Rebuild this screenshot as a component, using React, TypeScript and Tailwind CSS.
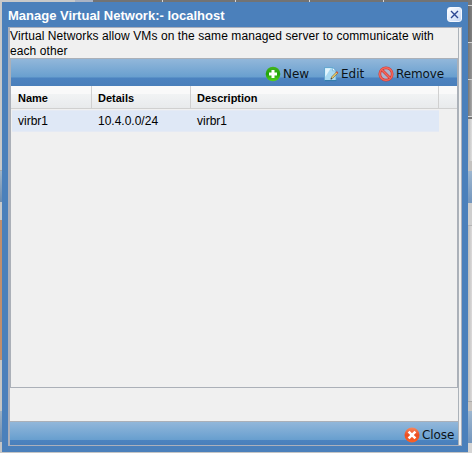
import React from 'react';

const Glossy = 'bg-[linear-gradient(to_bottom,#92b7da_0%,#689fcf_68%,#4c83c0_69%,#497fba_100%)]';
const FooterGlossy = 'bg-[linear-gradient(to_bottom,#92b7da_0%,#689fcf_77%,#4c83c0_78%,#497fba_100%)]';

function AddIcon() {
  return (
    <svg width="16" height="16" viewBox="0 0 16 16" className="shrink-0">
      <defs>
        <linearGradient id="add" x1="0" y1="0" x2="0" y2="1">
          <stop offset="0" stopColor="#45b51d" />
          <stop offset="0.5" stopColor="#20a30b" />
          <stop offset="1" stopColor="#57d41f" />
        </linearGradient>
      </defs>
      <circle cx="8" cy="8" r="7.3" fill="url(#add)" />
      <path d="M6.5 4h3v2.5H12v3H9.5V12h-3V9.5H4v-3h2.5z" fill="#fff" />
    </svg>
  );
}

function EditIcon() {
  return (
    <svg width="16" height="16" viewBox="0 0 16 16" className="shrink-0">
      <path d="M1.5 1.5h8.5l3 3V14.5H1.5z" fill="#a9daf2" stroke="#5aa1cc" strokeWidth="0.8" />
      <path d="M2.2 2.2h5.6L2.2 11z" fill="#e2f5fd" />
      <path d="M9.6 1.5v3.3h3.2z" fill="#fff" stroke="#5aa1cc" strokeWidth="0.6" />
      <path d="M1.5 14.6h12" stroke="#317aab" strokeWidth="1" />
      <path d="M8 13l.6-2.1 4.9-5 1.3 1.2-4.9 5z" fill="#f1cf62" stroke="#695735" strokeWidth="0.6" />
      <path d="M13 6.2l.8-.9 1.5 1.3-.9 1z" fill="#d75038" />
      <path d="M7.6 13.4l.4-1.5 1.1 1z" fill="#222" />
    </svg>
  );
}

function RemoveIcon() {
  return (
    <svg width="16" height="16" viewBox="0 0 16 16" className="shrink-0">
      <circle cx="8" cy="8" r="6.2" fill="#a9b4cf" stroke="#cd3933" strokeWidth="2.7" />
      <circle cx="8" cy="8" r="6.3" fill="none" stroke="#f5675c" strokeWidth="1.5" />
      <path d="M4 4l8 8" stroke="#cd3933" strokeWidth="2.7" />
      <path d="M3.8 3.8l8.4 8.4" stroke="#f5675c" strokeWidth="1.5" />
    </svg>
  );
}

function CloseIcon() {
  return (
    <svg width="16" height="16" viewBox="0 0 16 16" className="shrink-0">
      <defs>
        <linearGradient id="close" x1="0" y1="0" x2="0" y2="1">
          <stop offset="0" stopColor="#f78a60" />
          <stop offset="0.5" stopColor="#ec4e22" />
          <stop offset="1" stopColor="#fa6224" />
        </linearGradient>
      </defs>
      <circle cx="8" cy="8" r="7.5" fill="url(#close)" />
      <path d="M4.6 4.6l6.8 6.8M11.4 4.6l-6.8 6.8" stroke="#fff" strokeWidth="2.6" />
    </svg>
  );
}

function ToolButton({ icon, label, className }: { icon: React.ReactNode; label: string; className: string }) {
  return (
    <button className={`flex items-center whitespace-nowrap font-['DejaVu_Sans',sans-serif] text-[12px] leading-4 text-[#0b1218] ${className}`}>
      {icon}
      <span className="pl-[2px]">{label}</span>
    </button>
  );
}

function Backdrop() {
  return (
    <div className="absolute inset-0 flex justify-between bg-[#c5c5c5]">
      <div className="flex w-[2px] flex-col">
        <div className="h-[171px] border-b border-[#a8a8a8] bg-[#c9c9c9]" />
        <div className="h-[31px] bg-linear-to-b from-[#a0b4c6] to-[#6c8cb0]" />
        <div className="h-[18px] bg-[#c9c9c9]" />
        <div className="h-[140px] bg-[#c18e6c]" />
        <div className="h-[51px] bg-[#c6c6c4]" />
        <div className="h-[31px] bg-linear-to-b from-[#9db0c2] to-[#6c8cb0]" />
      </div>
      <div className="flex h-[2px] flex-1">
        <div className="w-[73px] bg-[#c9c9c9]" />
        <div className="w-[18px] bg-[#aab3c4]" />
        <div className="w-[70px] border-r border-[#d5d5d5] bg-[#737373]" />
        <div className="w-[73px] border-r border-[#d5d5d5] bg-[#737373]" />
        <div className="w-[74px] border-r border-[#d5d5d5] bg-[#737373]" />
        <div className="w-[74px] border-r border-[#d5d5d5] bg-[#737373]" />
        <div className="flex-1 bg-[#737373]" />
      </div>
      <div className="flex w-1 flex-col">
        <div className="h-[6px] border-b border-[#d0d0d0] bg-[#777]" />
        <div className="h-[37px] border-b border-[#d0d0d0] bg-linear-to-r from-[#686868] to-[#808080]" />
        <div className="h-[37px] border-b border-[#d0d0d0] bg-linear-to-r from-[#777] to-[#949494]" />
        <div className="h-[37px] border-b border-[#d8d8d8] bg-linear-to-r from-[#777] to-[#aaa]" />
        <div className="h-[2px] bg-[#777]" />
        <div className="h-[42px] bg-linear-to-r from-[#bbb] to-[#dedede]" />
        <div className="h-[10px] bg-[#c4c2c0]" />
        <div className="h-[32px] bg-linear-to-b from-[#9db6cf] to-[#7496bd]" />
        <div className="h-[23px] border-b border-[#b5b5b5] bg-[#cecece]" />
        <div className="h-[175px] bg-linear-to-r from-[#bdbdbd] to-[#dcdada]" />
        <div className="h-[10px] border-t border-[#aaa] bg-[#c8c4c0]" />
        <div className="h-[32px] bg-linear-to-b from-[#9db6cf] to-[#7496bd]" />
        <div className="flex-1 bg-[#d5d5d5]" />
      </div>
    </div>
  );
}

function Cell({ children, className }: { children?: React.ReactNode; className: string }) {
  return <div className={`whitespace-nowrap pl-[6px] ${className}`}>{children}</div>;
}

export default function App() {
  return (
    <div className="relative h-[453px] w-[472px] overflow-hidden font-['Liberation_Sans',Arial,sans-serif] text-black">
      <Backdrop />
      <div className="relative mt-[2px] ml-[2px] flex h-[450px] w-[466px] flex-col bg-[#4b80bb] px-[6px] pb-[6px]">
        <header className="flex h-[25px] shrink-0 items-center justify-between">
          <h1 className="pt-[2px] text-[13px] leading-4 font-bold whitespace-nowrap text-white">Manage Virtual Network:- localhost</h1>
          <button className="flex size-[15px] items-center justify-center rounded-[3px] border border-[#f4f8ff] bg-linear-to-br from-white to-[#c5d8f6]">
            <svg width="9" height="9" viewBox="0 0 9 9">
              <path d="M1 1l7 7M8 1L1 8" stroke="#2b4793" strokeWidth="1.4" />
            </svg>
          </button>
        </header>
        <div className="flex min-h-0 flex-1 border-y border-r border-[#abb0bc] bg-[#f0f0f0]">
          <div className="flex w-[451px] flex-col border-r border-l-2 border-r-[#abb2b9] border-l-[#abb0bc]">
            <p className="h-[30px] shrink-0 pt-px text-[12px] leading-[15px] tracking-[0.09px] whitespace-nowrap">
              Virtual Networks allow VMs on the same managed server to communicate with
              <br />
              each other
            </p>
            <section className="flex h-[330px] shrink-0 flex-col border border-[#abb0b8]">
              <div className={`flex h-[27px] shrink-0 items-center justify-end pt-[2px] pr-[12px] ${Glossy}`}>
                <ToolButton icon={<AddIcon />} label="New" className="w-[58px]" />
                <ToolButton icon={<EditIcon />} label="Edit" className="w-[55px]" />
                <ToolButton icon={<RemoveIcon />} label="Remove" className="w-[67px] tracking-[-0.1px]" />
              </div>
              <div className="flex h-[23px] shrink-0 border-b border-[#d0d0d0] bg-[linear-gradient(to_bottom,#f9f9f9_0%,#f9f9f9_36%,#f1f3f4_37%,#e8eaec_100%)] pl-px text-[11px] leading-[24px] font-bold">
                <Cell className="w-[80px] border-r border-[#d0d0d0]">Name</Cell>
                <Cell className="w-[99px] border-r border-[#d0d0d0]">Details</Cell>
                <Cell className="w-[248px] border-r border-[#d0d0d0]">Description</Cell>
              </div>
              <div className="mt-px ml-px flex h-[22px] w-[427px] shrink-0 border border-x-0 border-[#e5eaf4] bg-[#dfe8f6] text-[12px] leading-[21px]">
                <Cell className="w-[80px]">virbr1</Cell>
                <Cell className="w-[99px]">10.4.0.0/24</Cell>
                <Cell className="flex-1">virbr1</Cell>
              </div>
            </section>
            <div className="h-[33px] shrink-0" />
            <footer className={`flex flex-1 items-center justify-end border-t border-[#abb0b8] pt-[3px] pr-[4px] ${FooterGlossy}`}>
              <ToolButton icon={<CloseIcon />} label="Close" className="w-[50px] tracking-[-0.1px]" />
            </footer>
          </div>
        </div>
      </div>
    </div>
  );
}
